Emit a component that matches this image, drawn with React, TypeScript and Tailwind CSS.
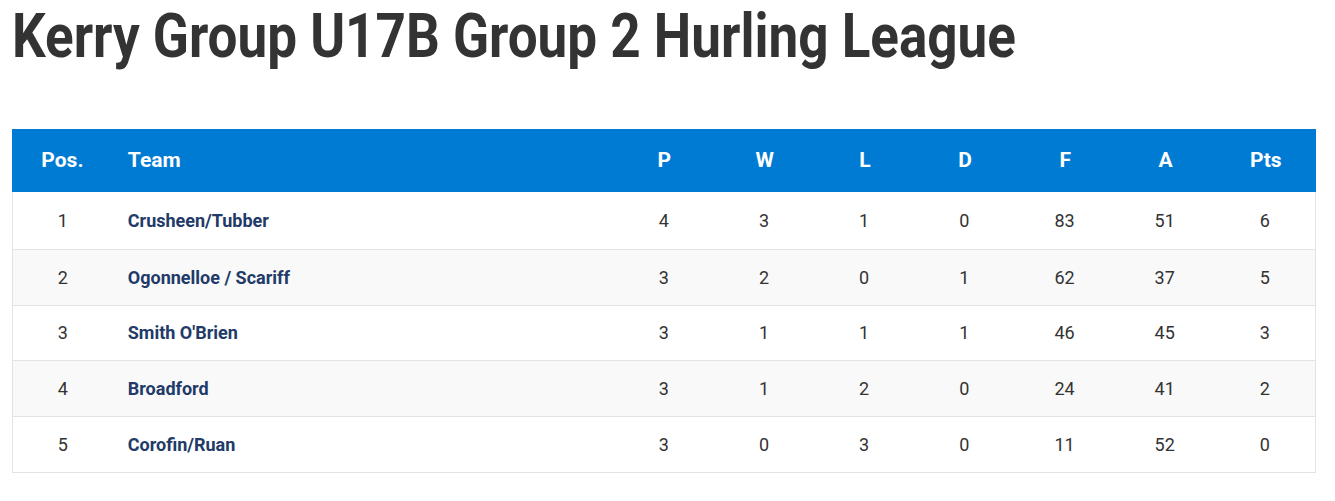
import React from "react";

const rows = [
  { pos: 1, team: "Crusheen/Tubber", p: 4, w: 3, l: 1, d: 0, f: 83, a: 51, pts: 6 },
  { pos: 2, team: "Ogonnelloe / Scariff", p: 3, w: 2, l: 0, d: 1, f: 62, a: 37, pts: 5 },
  { pos: 3, team: "Smith O'Brien", p: 3, w: 1, l: 1, d: 1, f: 46, a: 45, pts: 3 },
  { pos: 4, team: "Broadford", p: 3, w: 1, l: 2, d: 0, f: 24, a: 41, pts: 2 },
  { pos: 5, team: "Corofin/Ruan", p: 3, w: 0, l: 3, d: 0, f: 11, a: 52, pts: 0 },
];

const cols = ["P", "W", "L", "D", "F", "A", "Pts"];

export default function App() {
  return (
    <div className="w-[1335px] h-[501px] bg-white font-['Roboto',sans-serif] overflow-hidden">
      <div className="pl-[12px] pt-0 h-[129px]">
        <h1 className="inline-block origin-left scale-x-[0.855] text-[62px] leading-[72px] font-bold text-[#333333] whitespace-nowrap">
          Kerry Group U17B Group 2 Hurling League
        </h1>
      </div>
      <div className="ml-[12px] w-[1304px] border-x border-b border-[#e3e3e3]">
        <div className="flex h-[63px] items-center bg-[#007bd3] text-white font-bold text-[21px] -mx-px">
          <div className="w-[101px] text-center">Pos.</div>
          <div className="w-[502px] pl-[15px]">Team</div>
          {cols.map((c) => (
            <div key={c} className="w-[100.4px] text-center">{c}</div>
          ))}
        </div>
        {rows.map((r, i) => (
          <div
            key={r.pos}
            className={`flex h-[55.8px] items-center text-[18px] text-[#333333] ${i > 0 ? "border-t border-[#e3e3e3]" : "mt-[1px]"} ${i % 2 === 1 ? "bg-[#f9f9f9]" : "bg-white"}`}
          >
            <div className="w-[100px] text-center">{r.pos}</div>
            <div className="w-[502px] pl-[15px] font-bold text-[#213a67]">{r.team}</div>
            {[r.p, r.w, r.l, r.d, r.f, r.a, r.pts].map((v, j) => (
              <div key={j} className="w-[100.4px] text-center">{v}</div>
            ))}
          </div>
        ))}
      </div>
    </div>
  );
}
